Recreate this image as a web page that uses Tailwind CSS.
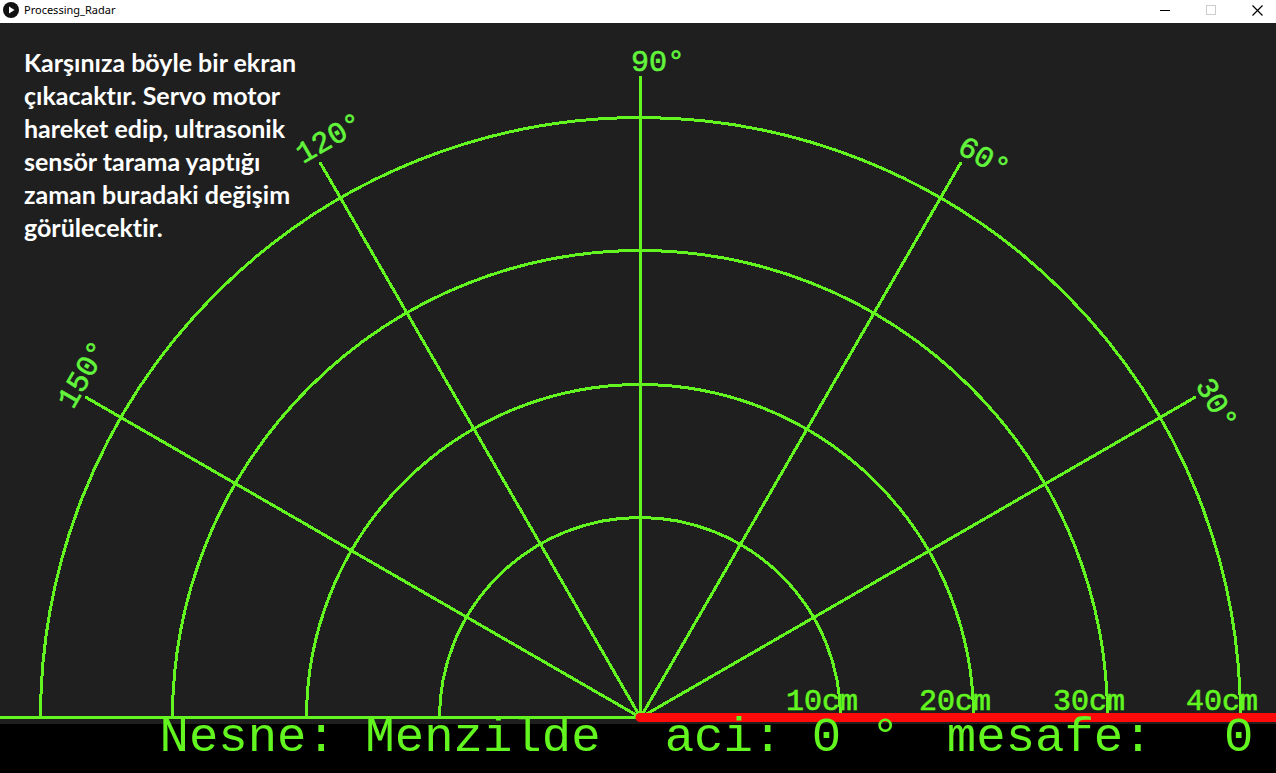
<!DOCTYPE html>
<html lang="tr">
<head>
<meta charset="utf-8">
<meta name="viewport" content="width=device-width, initial-scale=1">
<title>Processing_Radar</title>
<script src="https://cdn.jsdelivr.net/npm/@tailwindcss/browser@4"></script>
</head>
<body class="flex h-screen flex-col overflow-hidden bg-[#1f1f1f]">
  <header class="flex h-[23px] shrink-0 items-center bg-white text-black">
    <svg class="-mt-[3px] ml-[3px] size-4 shrink-0" viewBox="0 0 16 16" aria-hidden="true">
      <circle cx="8" cy="8" r="8" fill="#111"/>
      <path d="M6 4.5 11.5 8 6 11.5Z" fill="#fff"/>
    </svg>
    <h1 class="-mt-[3px] ml-[5px] flex-1 font-['Noto_Sans',sans-serif] text-[11px] leading-4">Processing_Radar</h1>
    <div class="-mr-1 flex h-full">
      <button type="button" aria-label="Minimize" class="flex w-[46px] items-center justify-center">
        <svg class="-mt-[2px] size-[11px]" viewBox="0 0 11 11" fill="none" stroke="#000" shape-rendering="crispEdges"><path d="M0 5.5H10"/></svg>
      </button>
      <button type="button" aria-label="Maximize" disabled class="flex w-[46px] items-center justify-center">
        <svg class="-mt-[2px] size-[11px]" viewBox="0 0 11 11" fill="none" stroke="#ccc" shape-rendering="crispEdges"><path d="M.5 .5h9v9h-9z"/></svg>
      </button>
      <button type="button" aria-label="Close" class="flex w-[46px] items-center justify-center">
        <svg class="-mt-[2px] size-[11px]" viewBox="0 0 11 11" fill="none" stroke="#000" stroke-width="1.2"><path d="M.5 .5l10 10M10.500 .5l-10 10"/></svg>
      </button>
    </div>
  </header>

  <main class="relative min-h-0 flex-1">
    <svg class="absolute inset-0 size-full overflow-visible" viewBox="0 0 1276 701" preserveAspectRatio="xMidYMax meet" role="img" aria-label="Radar">
      <!-- range rings and bearing lines -->
      <g fill="none" stroke="#62f51f" stroke-width="3" shape-rendering="crispEdges">
        <path d="M40.500 694.500a600 600 0 0 1 1200 0"/>
        <path d="M172.500 694.500a467.500 467 0 0 1 935 0"/>
        <path d="M306.500 694.500a333.500 333 0 0 1 667 0"/>
        <path d="M439.500 694.500a200.500 200 0 0 1 401 0"/>
        <path d="M-2000 694.500H640.500"/>
        <g stroke-linecap="round">
          <path d="M640.500 694.500L1194.700 374.500"/>
          <path d="M640.500 694.500L960.500 140.300"/>
          <path d="M640.500 694.500L320.500 140.300"/>
          <path d="M640.500 694.500L86.300 374.500"/>
        </g>
        <path d="M640.500 694.500V53"/>
      </g>
      <!-- distance and bearing labels -->
      <g class="font-['Liberation_Mono',monospace] text-[30px]" fill="#62f51f" stroke="#62f51f" stroke-width="0.6">
        <text x="786" y="687">10cm</text>
        <text x="919" y="687">20cm</text>
        <text x="1053" y="687">30cm</text>
        <text x="1186" y="687">40cm</text>
      </g>
      <g class="font-['Liberation_Mono',monospace] text-[30px]" fill="#62f53c" stroke="#62f53c" stroke-width="0.6">
        <text transform="translate(1195 362) rotate(60)">30°</text>
        <text transform="translate(956 129) rotate(30)">60°</text>
        <text transform="translate(631 48)">90°</text>
        <text transform="translate(303 141) rotate(-30)">120°</text>
        <text transform="translate(73 387) rotate(-60)">150°</text>
      </g>
      <!-- sweep beam -->
      <path d="M640 694.500H3000" stroke="#ff0a0a" stroke-width="9" stroke-linecap="round"/>
    </svg>
    <p class="relative pt-[23px] pl-6 font-['Lato',sans-serif] text-[25px] leading-[33px] font-bold text-white [font-variant-ligatures:none]">
      Karşınıza böyle bir ekran<br>
      çıkacaktır. Servo motor<br>
      hareket edip, ultrasonik<br>
      sensör tarama yaptığı<br>
      zaman buradaki değişim<br>
      görülecektir.
    </p>
  </main>

  <footer class="relative grid shrink-0 grid-cols-[505fr_282fr_277fr_52fr] bg-black pb-[21px] pl-[12.5%] font-['Liberation_Mono',monospace] text-[49px] leading-[28px] whitespace-pre text-[#62f51f]">
    <span class="min-w-0">Nesne: Menzilde</span>
    <span class="min-w-0">aci: 0 °</span>
    <span class="min-w-0">mesafe:</span>
    <span class="min-w-0">0</span>
  </footer>
</body>
</html>
